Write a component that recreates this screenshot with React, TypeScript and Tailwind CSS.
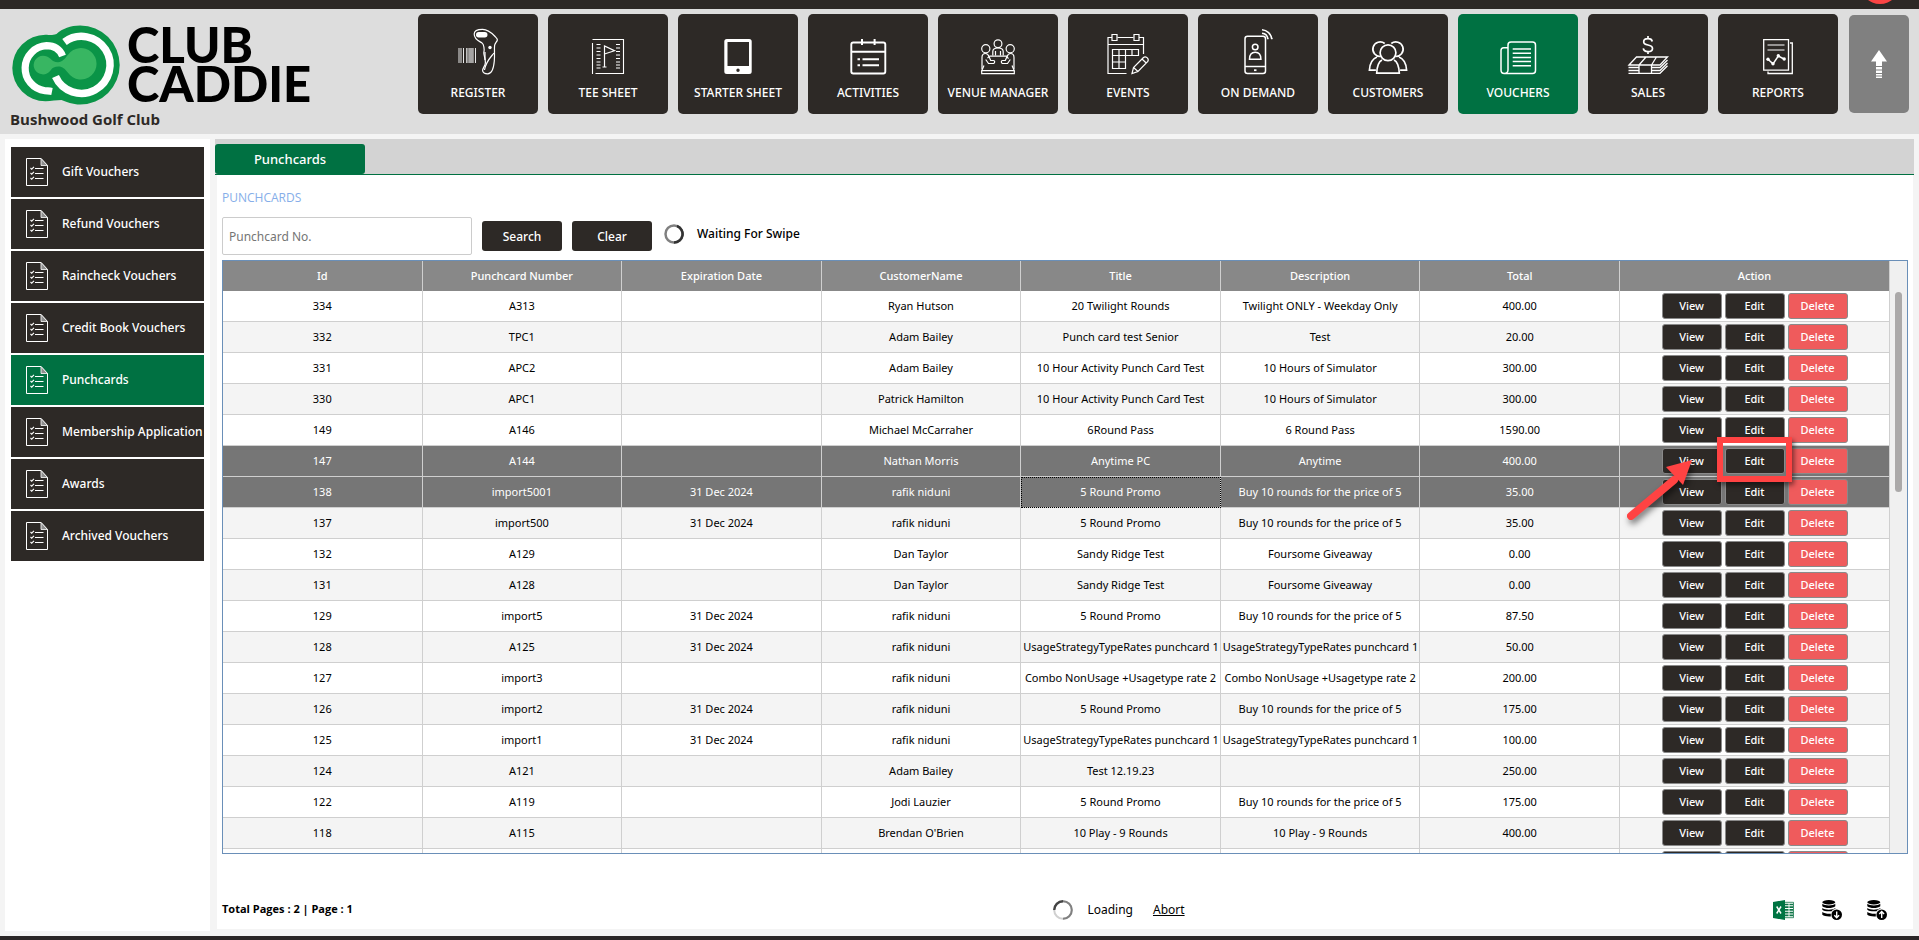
import type { ReactNode } from "react";

const Register = () => (
  <>
    <path d="M41 34v15M43 34v15M45.5 34v15M49 34v15M51 34v15M53 34v15M55 34v15M57.500 34v15" strokeWidth="0.9" />
    <path d="M48.500 34v15M52 34v15M54 34v15" strokeWidth="0.8" opacity="0.6" />
    <path d="M56.200 20c0-3 3.500-4.700 8.400-4.700 5 0 8.700 3.200 12 6.700 1.600 1.700 3.200 2.600 2.700 4.200-.5 1.500-2.400 3.300-2.700 5.300-.5 4 .3 9.500-.3 15.500-.5 6-2.300 12.800-6.600 12.800-2.700 0-5.200-1.200-5.100-3.400.1-2.500 2.800-4.600 2.800-8 0-3.500-1.600-7.500-1.600-9.400 1-4-.2-8.700-1.600-9.900-2-1.700-8-3.100-8-9.100z" />
    <path d="M76 39c-3 4-8 8-9.500 17M67 38v8" />
    <rect x="58" y="18" width="11.500" height="5.500" rx="2.700" fill="currentColor" stroke="none" />
    <circle cx="72" cy="33.500" r="1.700" fill="currentColor" stroke="none" />
  </>
);
const TeeSheet = () => (
  <>
    <path d="M44.500 29V60M44.500 25.500h31v34H47.500" strokeWidth="1.100" />
    <path d="M48.500 30.500h4M48.500 34h4M48.500 37.500h4M48.500 41h4M48.500 44.500h4M48.500 48h4M48.500 51h4M48.500 54h4M68 30.500h4M68 34h4M68 37.500h4M68 41h4M68 44.500h4M68 48h4M68 51h4M68 54h4" strokeWidth="1.100" />
    <path d="M56.500 53V32l10 4.700-10 3.300M54.500 53h4" />
  </>
);
const StarterSheet = () => (
  <path
    fill="currentColor"
    stroke="none"
    fillRule="evenodd"
    d="M48.800 25h22.400a2.500 2.500 0 0 1 2.500 2.500v30a2.500 2.500 0 0 1-2.500 2.500H48.800a2.500 2.500 0 0 1-2.500-2.500v-30a2.500 2.500 0 0 1 2.500-2.500zM49.500 28v24h21.500V28zM60 54.600a1.700 1.700 0 1 0 0 3.400 1.700 1.700 0 0 0 0-3.400z"
  />
);
const Activities = () => (
  <>
    <rect x="43.300" y="28.500" width="34" height="31" rx="2" strokeWidth="1.900" />
    <path d="M43 37.700h34.500" strokeWidth="1.900" />
    <path d="M54 25v6M66.600 25v6M54.500 45.300H71M54.500 51.300H71M49.500 45.300h2.500M49.500 51.300h2.500" strokeWidth="2" />
  </>
);
const Venue = () => (
  <>
    <circle cx="60" cy="29.700" r="3.900" />
    <circle cx="47.800" cy="34.800" r="4.100" />
    <circle cx="72.200" cy="34.800" r="4.100" />
    <path d="M54.800 41.500v-4c0-2.300 2-3.500 5.200-3.500s5.200 1.200 5.200 3.500v4M57.500 37v4.500M62.500 37v4.500" />
    <path d="M51.500 42.200h17l2 2.500M51.500 42.200l-2 2M46 51.500l-2.300 5.200h32.600L74 51.500M43.700 57v2.600h32.600V57" />
    <path d="M44 55V43.500c0-2.500 1.300-4 3.500-4s3 1.500 3.700 3.500l1.500 3.500h2.800c1.600 0 1.600 2.500 0 3h-5l-2.800-4M76 55V43.500c0-2.500-1.300-4-3.500-4s-3 1.500-3.700 3.500l-1.500 3.500h-2.800c-1.600 0-1.600 2.500 0 3h5l2.800-4" />
  </>
);
const Events = () => (
  <>
    <path d="M44 23.500h-4v36h18.500M49.500 23.500h16M71 23.500h4.500V40M40 30.500h35.500" />
    <path d="M44 20.500h5v6h-5zM66 20.500h5v6h-5zM44.500 35.500h26v6h-26zM51 35.500v19M57.500 35.500v19h-13v-19M64 35.500v6M44.500 48h13" />
    <path d="M64 59.500l1.500-6 10-10c2-2 6 1 4.300 4L70 57.500zM65.500 53.500l4.500 4M74 45l4.500 4.200" />
  </>
);
const OnDemand = () => (
  <>
    <rect x="47" y="22.300" width="20.500" height="37.200" rx="2.500" strokeWidth="1.500" />
    <path d="M47 52.500h20.500" strokeWidth="1.500" />
    <path d="M56 56.200h2.500" strokeWidth="1.800" />
    <circle cx="57.200" cy="33" r="2.800" strokeWidth="1.500" />
    <path d="M51.500 45.200c0-5 1.500-7 5.700-7s5.700 2 5.700 7z" strokeWidth="1.500" />
    <path d="M64 15.800c5 .3 9.300 4.200 9.700 9.200M64 19.300c3.200.3 5.500 2.600 5.800 5.500" strokeWidth="1.500" />
    <path d="M69 24.500h1.500M73 24.500h1.500" strokeWidth="1.500" />
  </>
);
const Customers = () => (
  <g strokeWidth="1.700">
    <path d="M52.700 42.500a7.300 7.300 0 1 1 4-13M67.300 42.500a7.300 7.300 0 1 0-4-13" />
    <circle cx="60" cy="38.700" r="7.900" />
    <path d="M54 46c-4 2-5 7-5.300 13.200h22.600C71 53 70 48 66 46M49 43c-5 2-7.300 7-7.600 13.200h6.500M71 43c5 2 7.300 7 7.600 13.200h-6.500" />
  </g>
);
const Vouchers = () => (
  <g strokeWidth="1.500">
    <path d="M50 33.700h-4.300c-1.800 0-2.700 1-2.700 2.800V56c0 2 1.300 3.500 3.300 3.500S50 58 50 56V31c0-2 1-3 3-3h21.500c2 0 3 1 3 3v25.500c0 2-1 3-3 3H46.500" />
    <path d="M54.700 35H73M54.700 39.200H73M54.700 43.400H73M54.700 47.600H73M54.700 51.800H73" />
  </g>
);
const Sales = () => (
  <>
    <path d="M64.300 27.500c-.4-2-2-2.800-4.300-2.800-2.700 0-4.300 1.200-4.300 3.200 0 4.500 8.800 1.700 8.800 6.500 0 2-1.800 3.200-4.500 3.200-2.600 0-4.400-1-4.700-3.200M60 22v3M60 37.500V40" strokeWidth="1.700" />
    <path d="M41 51l7.500-8h31L72 51zM58 43l-7 8M68.500 43l-5 8" strokeWidth="1.300" />
    <path d="M40.500 53.500H51M63.500 53.500H72l7.500-7.500M40.500 56.500H51M63.500 56.500H72l7.500-7.500M40.500 59.300H72l7.500-7.500M51 51v8M63.500 51v8" strokeWidth="1.300" />
  </>
);
const Reports = () => (
  <>
    <path d="M45.700 25.700h24.800v30.500H45.700zM72 29h2.300v30.500H50V57.500" strokeWidth="1.300" />
    <path d="M49.500 31h17M49.500 36h17" />
    <path d="M50 45.300l5 4.500L60.300 42l5.700 3" strokeWidth="1.500" />
    <g fill="currentColor" stroke="none">
      <circle cx="50" cy="45.300" r="1.700" /><circle cx="55" cy="49.700" r="1.700" /><circle cx="60.300" cy="41.700" r="1.700" /><circle cx="66.200" cy="45" r="1.700" />
    </g>
  </>
);

const navItems: { label: string; icon: ReactNode; active?: boolean }[] = [
  { label: "REGISTER", icon: <Register /> },
  { label: "TEE SHEET", icon: <TeeSheet /> },
  { label: "STARTER SHEET", icon: <StarterSheet /> },
  { label: "ACTIVITIES", icon: <Activities /> },
  { label: "VENUE MANAGER", icon: <Venue /> },
  { label: "EVENTS", icon: <Events /> },
  { label: "ON DEMAND", icon: <OnDemand /> },
  { label: "CUSTOMERS", icon: <Customers /> },
  { label: "VOUCHERS", icon: <Vouchers />, active: true },
  { label: "SALES", icon: <Sales /> },
  { label: "REPORTS", icon: <Reports /> },
];

const sideItems = [
  "Gift Vouchers", "Refund Vouchers", "Raincheck Vouchers", "Credit Book Vouchers",
  "Punchcards", "Membership Application", "Awards", "Archived Vouchers",
];

const columns = ["Id", "Punchcard Number", "Expiration Date", "CustomerName", "Title", "Description", "Total"];

const promo = "Buy 10 rounds for the price of 5";
const usage = "UsageStrategyTypeRates punchcard 1";
const combo = "Combo NonUsage +Usagetype rate 2";
const rows: string[][] = [
  ["334", "A313", "", "Ryan Hutson", "20 Twilight Rounds", "Twilight ONLY - Weekday Only", "400.00"],
  ["332", "TPC1", "", "Adam Bailey", "Punch card test Senior", "Test", "20.00"],
  ["331", "APC2", "", "Adam Bailey", "10 Hour Activity Punch Card Test", "10 Hours of Simulator", "300.00"],
  ["330", "APC1", "", "Patrick Hamilton", "10 Hour Activity Punch Card Test", "10 Hours of Simulator", "300.00"],
  ["149", "A146", "", "Michael McCarraher", "6Round Pass", "6 Round Pass", "1590.00"],
  ["147", "A144", "", "Nathan Morris", "Anytime PC", "Anytime", "400.00"],
  ["138", "import5001", "31 Dec 2024", "rafik niduni", "5 Round Promo", promo, "35.00"],
  ["137", "import500", "31 Dec 2024", "rafik niduni", "5 Round Promo", promo, "35.00"],
  ["132", "A129", "", "Dan Taylor", "Sandy Ridge Test", "Foursome Giveaway", "0.00"],
  ["131", "A128", "", "Dan Taylor", "Sandy Ridge Test", "Foursome Giveaway", "0.00"],
  ["129", "import5", "31 Dec 2024", "rafik niduni", "5 Round Promo", promo, "87.50"],
  ["128", "A125", "31 Dec 2024", "rafik niduni", usage, usage, "50.00"],
  ["127", "import3", "", "rafik niduni", combo, combo, "200.00"],
  ["126", "import2", "31 Dec 2024", "rafik niduni", "5 Round Promo", promo, "175.00"],
  ["125", "import1", "31 Dec 2024", "rafik niduni", usage, usage, "100.00"],
  ["124", "A121", "", "Adam Bailey", "Test 12.19.23", "", "250.00"],
  ["122", "A119", "", "Jodi Lauzier", "5 Round Promo", promo, "175.00"],
  ["118", "A115", "", "Brendan O'Brien", "10 Play - 9 Rounds", "10 Play - 9 Rounds", "400.00"],
  ["", "", "", "", "", "", ""],
];
const selected = ["147", "138"];

function Logo() {
  return (
    <div className="flex h-[84px] items-start gap-[7px]">
      <svg className="h-[80px] w-[108px] shrink-0" viewBox="12.500 24.500 108 80" aria-hidden="true">
        <path
          fill="#0a9447"
          d="M46 34.300C50 34.300 52 35.300 57 33.500 63 28 71 25 80.700 25A39.500 39.500 0 0 1 80.700 104C73 104 67 101.500 62 99.500 57 99.500 52 100.700 46 100.700A33.200 33.200 0 0 1 46 34.300z"
        />
        <path d="M65 41.500A28.500 28.500 0 1 1 56 76" fill="none" stroke="#fff" strokeWidth="7.500" />
        <path d="M63 55.500C60 48 54 45.200 47 45.200A22.600 22.600 0 0 0 45.500 90.200C48 90.500 50 90.500 52.500 91" fill="none" stroke="#fff" strokeWidth="7.200" />
        <path
          fill="#38b662"
          d="M43.500 55.300c3 0 5.200 1 7.500 3 2 2 4 3.500 7.500 3.500 4.500 0 7-4 10-7.500a15.700 15.700 0 1 1 0 18c-3-4-5.500-6.300-9.500-6.300s-6 1-8 4a9.300 9.300 0 1 1-7.500-14.700z"
        />
      </svg>
      <p className="font-[Lato,sans-serif] text-[49px] font-black leading-[39px] text-black">
        CLUB
        <br />
        CADDIE
      </p>
    </div>
  );
}

function ChecklistIcon() {
  return (
    <svg className="h-7 w-[22px] shrink-0" viewBox="0 0 22 28" fill="none" stroke="currentColor" aria-hidden="true">
      <path d="M.5.5h14.500l6.500 7v20H.5z" />
      <path d="M15 .5v7h6.500z" fill="#8f8f8f" strokeWidth="0.800" />
      <path d="M9 10.500h8.500M9 15.500h8.500M9 20.500h8.500" />
      <path d="M4.500 10l1.200 1.200L8 8.800M4.500 15l1.200 1.200L8 13.800M4.500 20l1.200 1.200L8 18.800" strokeWidth="1.100" />
    </svg>
  );
}

function DatabaseIcon({ up }: { up?: boolean }) {
  return (
    <svg className="h-5 w-5" viewBox="0 0 20 20" aria-hidden="true">
      <ellipse cx="6.800" cy="2.300" rx="6.500" ry="2.200" />
      <path d="M.3 3.800c2.500 2.300 10.500 2.300 13 0v2.400c-2.500 2.400-10.500 2.400-13 0zM.3 8c2.500 2.300 10.500 2.300 13 0v1c-2 .4-3 1-3.800 2.200-3.700.4-7.700 0-9.200-1.500zM.3 12c2 1.600 5.500 1.900 8.500 1.700v2.700c-3.500.2-7-.2-8.500-1.600z" />
      <circle cx="14.700" cy="14.700" r="5.300" />
      <path d={up ? "M14.700 18v-6M12.300 14l2.400-2.500 2.400 2.500" : "M14.700 11.500v6M12.300 15.300l2.400 2.500 2.400-2.500"} fill="none" stroke="#fff" strokeWidth="1.400" />
    </svg>
  );
}

function ExcelIcon() {
  return (
    <svg className="h-5 w-[21px]" viewBox="0 0 21 20" aria-hidden="true">
      <path d="M11 2.300h9.500v15.400H11z" fill="#fff" stroke="#107548" strokeWidth="0.800" />
      <path d="M12 4.500h8M12 7.200h8M12 9.900h8M12 12.600h8M12 15.300h8" stroke="#107548" strokeWidth="1.700" />
      <path d="M16 3v14" stroke="#fff" strokeWidth="0.900" />
      <path d="M0 2l12-2v20L0 18z" fill="#007443" />
      <path d="M3.700 6.500l4.300 7M8 6.500l-4.300 7" stroke="#fff" strokeWidth="1.500" />
    </svg>
  );
}

function Annotation() {
  return (
    <>
      <div className="pointer-events-none absolute right-[115px] top-[176px] h-[45px] w-[75px] border-6 border-[#ff4343] shadow-[2px_3px_5px_rgba(0,0,0,0.5)]" />
      <svg
        className="pointer-events-none absolute right-[210px] top-[195px] h-[70px] w-[74px] drop-shadow-[2px_4px_3px_rgba(0,0,0,0.5)]"
        viewBox="0 0 74 70"
        aria-hidden="true"
      >
        <path d="M8 60L51 24" stroke="#ff4343" strokeWidth="8" strokeLinecap="round" />
        <path d="M69 4L43 11l17 18z" fill="#ff4343" />
      </svg>
    </>
  );
}

const actionButton = "h-[26px] w-[60px] rounded-[3px] border border-[#8a8a8a] text-[11px] font-medium text-white";

export default function App() {
  return (
    <div className="flex h-screen flex-col bg-[#f4f4f4] font-['Noto_Sans','Segoe_UI',sans-serif] text-xs text-[#1b1b1b]">
      <div className="relative h-[9px] shrink-0 overflow-hidden bg-[#2d2926]">
        <span className="absolute bottom-[5px] right-[19px] size-10 rounded-full bg-[#fb4444]" />
      </div>

      <header className="flex h-[125px] shrink-0 justify-between bg-[#dddddd] pr-[10px]">
        <div className="pl-[10px] pt-4">
          <div className="pl-[2px]"><Logo /></div>
          <div className="font-['Open_Sans','Segoe_UI',sans-serif] text-[15px] font-bold leading-5 text-[#2d2926]">Bushwood Golf Club</div>
        </div>
        <div className="flex gap-[11px] pt-[5px]">
          <nav className="flex gap-[10px]">
            {navItems.map((item) => (
              <button
                key={item.label}
                type="button"
                className={`flex h-[100px] w-[120px] flex-col items-center gap-[7px] rounded-[5px] pt-[10px] text-white ${item.active ? "bg-[#007142]" : "bg-[#2d2926]"}`}
              >
                <svg className="h-[52px] w-[60px]" viewBox="30 10 60 52" fill="none" stroke="currentColor" strokeWidth="1.200" aria-hidden="true">
                  {item.icon}
                </svg>
                <span className="whitespace-nowrap text-xs font-medium leading-5">{item.label}</span>
              </button>
            ))}
          </nav>
          <button type="button" aria-label="Scroll up" className="mt-px flex h-[98px] w-[60px] items-center justify-center rounded-[5px] bg-[#808080] text-white">
            <svg className="h-7 w-4" viewBox="0 0 16 28" fill="currentColor" aria-hidden="true">
              <path d="M8 0l8 11.500h-5V16H5v-4.500H0zM5 17h6v2.500H5zM5 20.500h6V23H5zM5 24h6v1.500H5zM5 26.500h6V28H5z" />
            </svg>
          </button>
        </div>
      </header>

      <div className="flex min-h-0 flex-1 gap-[5px] p-[5px]">
        <aside className="flex w-[205px] shrink-0 flex-col gap-[2px] bg-white px-[6px] pt-2">
          {sideItems.map((label) => (
            <a
              key={label}
              href="#"
              className={`flex h-[50px] shrink-0 items-center gap-[14px] overflow-hidden whitespace-nowrap pl-[15px] text-xs font-medium text-white ${label === "Punchcards" ? "bg-[#007142]" : "bg-[#2d2926]"}`}
            >
              <ChecklistIcon />
              {label}
            </a>
          ))}
        </aside>

        <main className="flex min-w-0 flex-1 flex-col">
          <div className="flex h-9 shrink-0 items-end border-b border-[#007142] bg-[#d3d3d3]">
            <button type="button" className="h-[30px] w-[150px] rounded-[3px] bg-[#007142] pt-px text-[13px] font-medium text-white">
              Punchcards
            </button>
          </div>

          <section className="mb-[2px] ml-[2px] mr-px flex min-h-0 flex-1 flex-col bg-white px-[5px]">
            <h1 className="mt-[13px] font-['Open_Sans','Segoe_UI',sans-serif] text-xs leading-5 text-[#86aee9]">PUNCHCARDS</h1>
            <div className="mt-[9px] flex items-center">
              <input
                aria-label="Punchcard No."
                placeholder="Punchcard No."
                className="h-[38px] w-[250px] rounded-[2px] border border-[#cccccc] px-[6px] text-xs placeholder:text-[#757575]"
              />
              <button type="button" className="ml-[10px] h-[30px] w-20 rounded-[3px] bg-[#2d2926] pt-px text-xs font-medium text-white">Search</button>
              <button type="button" className="ml-[10px] h-[30px] w-20 rounded-[3px] bg-[#2d2926] pt-px text-xs font-medium text-white">Clear</button>
              <div className="flex items-center gap-[13px] pb-1 pl-3">
                <svg className="size-5" viewBox="0 0 20 20" fill="none" strokeWidth="2.500" aria-hidden="true">
                  <circle cx="10" cy="10" r="8.500" stroke="#808080" />
                  <path d="M13 2a8.500 8.500 0 0 1-3 16.500" stroke="#333" />
                </svg>
                <span className="text-xs font-medium text-black">Waiting For Swipe</span>
              </div>
            </div>

            <div className="relative mt-[5px] flex min-h-0 flex-1 border border-[#6a8fb8]">
              <div className="min-w-0 flex-1 overflow-hidden">
                <table className="w-full table-fixed border-separate border-spacing-0 text-center text-[11px] text-black">
                  <colgroup>
                    {columns.map((c) => <col key={c} />)}
                    <col className="w-[270px]" />
                  </colgroup>
                  <thead>
                    <tr className="h-[30px] bg-[#888888] text-white">
                      {columns.map((c) => (
                        <th key={c} className="border-r border-[#cfcfcf] p-0 font-medium">{c}</th>
                      ))}
                      <th className="border-r border-[#cfcfcf] p-0 font-medium">Action</th>
                    </tr>
                  </thead>
                  <tbody>
                    {rows.map((row, i) => {
                      const isSelected = selected.includes(row[0]);
                      return (
                        <tr key={i} className={`h-[31px] ${isSelected ? "bg-[#767676] text-white" : i % 2 ? "bg-[#f4f4f4]" : "bg-white"}`}>
                          {row.map((cell, j) => (
                            <td
                              key={j}
                              className={`overflow-hidden whitespace-nowrap border-b border-r border-[#cfcfcf] px-[2px] py-0 ${row[0] === "138" && j === 4 ? "outline-1 -outline-offset-1 outline-dotted outline-black" : ""}`}
                            >
                              {cell}
                            </td>
                          ))}
                          <td className="border-b border-r border-[#cfcfcf] p-0">
                            <div className="flex items-center justify-center gap-[3px]">
                              <button type="button" aria-label="View" className={`${actionButton} bg-[#2d2926]`}>{row[0] && "View"}</button>
                              <button type="button" aria-label="Edit" className={`${actionButton} bg-[#2d2926]`}>{row[0] && "Edit"}</button>
                              <button type="button" aria-label="Delete" className={`${actionButton} bg-[#ef5b5c]`}>{row[0] && "Delete"}</button>
                            </div>
                          </td>
                        </tr>
                      );
                    })}
                  </tbody>
                </table>
              </div>
              <div className="flex w-[17px] shrink-0 justify-center bg-[#f0f0f0] pt-[31px]">
                <div className="h-[200px] w-[7px] rounded-full bg-[#aba9a9]" />
              </div>
              <Annotation />
            </div>

            <footer className="mt-9 grid h-[39px] shrink-0 grid-cols-3 items-center text-black">
              <span className="font-['Open_Sans','Segoe_UI',sans-serif] text-[11px] font-bold">Total Pages : 2 | Page : 1</span>
              <div className="flex items-center justify-center pl-[108px]">
                <svg className="size-5" viewBox="0 0 20 20" fill="none" strokeWidth="2" aria-hidden="true">
                  <circle cx="10" cy="10" r="8.800" stroke="#d0d0d0" />
                  <path d="M10 1.200a8.800 8.800 0 0 1 0 17.600" stroke="#808080" />
                  <path d="M1.200 10A8.800 8.800 0 0 1 10 1.200" stroke="#444" strokeWidth="2.400" />
                </svg>
                <span className="ml-[14px]">Loading</span>
                <a href="#" className="ml-5 underline">Abort</a>
              </div>
              <div className="flex justify-end pr-[21px]">
                <button type="button" aria-label="Export to Excel"><ExcelIcon /></button>
                <button type="button" aria-label="Download data" className="ml-7"><DatabaseIcon /></button>
                <button type="button" aria-label="Upload data" className="ml-[25px]"><DatabaseIcon up /></button>
              </div>
            </footer>
          </section>
        </main>
      </div>
      <div className="h-1 shrink-0 bg-[#2a2627]" />
    </div>
  );
}
